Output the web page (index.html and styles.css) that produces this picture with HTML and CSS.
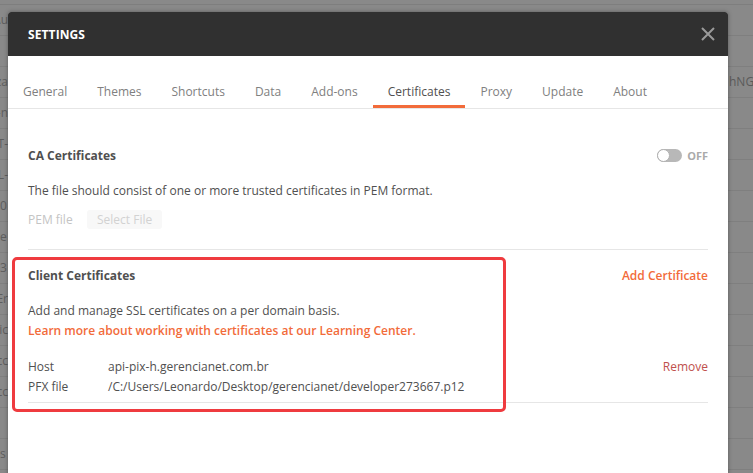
FILE: index.html
```html
<!DOCTYPE html>
<html>
<head>
<meta charset="utf-8">
<link rel="stylesheet" href="styles.css">
</head>
<body>
<div class="backdrop">
  <div class="bg-top"></div>
  <div class="bg-row"><span class="frag">Au</span></div>
  <div class="bg-row"><span class="frag"></span></div>
  <div class="bg-row"><span class="frag">za</span><span class="frag-r">hNG</span></div>
  <div class="bg-row"><span class="frag">n-</span></div>
  <div class="bg-row"><span class="frag">-T</span></div>
  <div class="bg-row"><span class="frag">-L</span></div>
  <div class="bg-row"><span class="frag">0</span></div>
  <div class="bg-row"><span class="frag">e</span></div>
  <div class="bg-row"><span class="frag">3</span></div>
  <div class="bg-row"><span class="frag">Er</span></div>
  <div class="bg-row"><span class="frag">tic</span></div>
  <div class="bg-row"><span class="frag">cc</span></div>
  <div class="bg-row"><span class="frag">cc</span></div>
  <div class="bg-row"><span class="frag"></span></div>
  <div class="bg-row"><span class="frag">s</span></div>
</div>

<div class="modal">
  <div class="modal-header">
    <span class="modal-title">SETTINGS</span>
    <svg class="close" width="14" height="14" viewBox="0 0 14 14"><path d="M1 1 L13 13 M13 1 L1 13" stroke="#9a9a9a" stroke-width="2" fill="none"/></svg>
  </div>
  <div class="tabs">
    <span class="tab">General</span>
    <span class="tab">Themes</span>
    <span class="tab">Shortcuts</span>
    <span class="tab">Data</span>
    <span class="tab">Add-ons</span>
    <span class="tab active">Certificates</span>
    <span class="tab">Proxy</span>
    <span class="tab">Update</span>
    <span class="tab">About</span>
  </div>
  <div class="content">
    <section class="section ca">
      <div class="sec-head">
        <span class="sec-title">CA Certificates</span>
        <span class="toggle-wrap"><span class="toggle"><span class="knob"></span></span><span class="off">OFF</span></span>
      </div>
      <p class="desc">The file should consist of one or more trusted certificates in PEM format.</p>
      <div class="pem-row">
        <span class="pem-label">PEM file</span>
        <span class="select-btn">Select File</span>
      </div>
    </section>
    <section class="section client">
      <div class="sec-head">
        <span class="sec-title">Client Certificates</span>
        <span class="add-link">Add Certificate</span>
      </div>
      <p class="desc first">Add and manage SSL certificates on a per domain basis.</p>
      <p class="learn">Learn more about working with certificates at our Learning Center.</p>
      <div class="cert">
        <div class="cert-rows">
          <div class="kv"><span class="k">Host</span><span class="v">api-pix-h.gerencianet.com.br</span></div>
          <div class="kv"><span class="k">PFX file</span><span class="v">/C:/Users/Leonardo/Desktop/gerencianet/developer273667.p12</span></div>
        </div>
        <span class="remove">Remove</span>
      </div>
    </section>
  </div>
</div>
<div class="highlight"></div>
</body>
</html>
```

FILE: styles.css
```css
html, body {
  margin: 0;
  padding: 0;
  width: 753px;
  height: 473px;
  overflow: hidden;
  font-family: "Open Sans", "Liberation Sans", sans-serif;
  background: #898989;
}

.backdrop {
  width: 753px;
  height: 473px;
  background: #898989;
}
.bg-top {
  height: 4px;
  border-bottom: 1px solid #7e7e7e;
}
.bg-row {
  height: 30px;
  border-bottom: 1px solid #7f7f7f;
  position: relative;
  font-size: 12px;
  line-height: 30px;
  color: #5e5e5e;
}
.frag {
  display: block;
  width: 8px;
  overflow: hidden;
  white-space: nowrap;
  direction: rtl;
  text-align: left;
}
.frag-r {
  position: absolute;
  left: 729px;
  top: 0;
  color: #5a5a5a;
}

.modal {
  position: absolute;
  left: 8px;
  top: 12px;
  width: 720px;
  height: 470px;
  background: #fff;
  border-radius: 3px 3px 0 0;
  box-shadow: 0 0 4px rgba(0,0,0,0.35);
}
.modal-header {
  height: 44px;
  background: #303030;
  border-radius: 3px 3px 0 0;
  display: flex;
  align-items: center;
  justify-content: space-between;
  padding: 0 13px 0 20px;
}
.modal-title {
  color: #fff;
  font-weight: 700;
  font-size: 12px;
  letter-spacing: 0.1px;
}
.close { display: block; }

.tabs {
  display: flex;
  margin-top: 26px;
  border-bottom: 1px solid #e6e6e6;
  height: 26px;
}
.tab {
  padding: 1px 15px 0;
  font-size: 12px;
  line-height: 18px;
  height: 26px;
  box-sizing: border-box;
  color: #808080;
  border-bottom: 3px solid transparent;
}
.tab.active {
  color: #505050;
  border-bottom-color: #f26b3a;
}

.content {
  padding: 0 20px;
}
.section {
  border-bottom: 1px solid #e6e6e6;
}
.section.ca {
  padding-top: 37px;
  padding-bottom: 20px;
}
.section.client {
  padding-top: 16px;
  padding-bottom: 5px;
}
.sec-head {
  display: flex;
  justify-content: space-between;
  align-items: center;
  height: 18px;
}
.sec-title {
  font-size: 12px;
  font-weight: 700;
  color: #505050;
}
.toggle-wrap {
  display: flex;
  align-items: center;
  gap: 5px;
}
.toggle {
  width: 25px;
  height: 13px;
  border-radius: 7px;
  background: #b8b8b8;
  position: relative;
  display: block;
}
.knob {
  position: absolute;
  left: 0;
  top: 0;
  width: 11px;
  height: 11px;
  border-radius: 50%;
  background: #fff;
  border: 1px solid #b0b0b0;
}
.off {
  font-size: 11px;
  font-weight: 700;
  color: #aaaaaa;
}
.desc {
  margin: 18px 0 0;
  font-size: 12px;
  line-height: 18px;
  color: #505050;
}
.pem-row {
  display: flex;
  align-items: center;
  margin-top: 10px;
}
.pem-label {
  width: 59px;
  font-size: 12px;
  color: #c4c4c4;
}
.select-btn {
  font-size: 12px;
  line-height: 19px;
  padding: 0 10px;
  background: #f8f8f8;
  color: #d2d2d2;
  border-radius: 3px;
}
.add-link {
  font-size: 12px;
  font-weight: 600;
  color: #f26b3a;
}
.desc.first {
  margin-top: 18px;
}
.learn {
  margin: 2px 0 0;
  font-size: 12px;
  line-height: 18px;
  font-weight: 600;
  color: #f26b3a;
}
.cert {
  margin-top: 17px;
  display: flex;
  justify-content: space-between;
  align-items: flex-start;
}
.kv {
  display: flex;
  font-size: 12px;
  line-height: 20px;
  color: #505050;
}
.k {
  width: 80px;
}
.remove {
  font-size: 12px;
  line-height: 20px;
  color: #c0504d;
}

.highlight {
  position: absolute;
  left: 12px;
  top: 257px;
  width: 488px;
  height: 149px;
  border: 3px solid #ef3b3f;
  border-radius: 5px;
}
```
